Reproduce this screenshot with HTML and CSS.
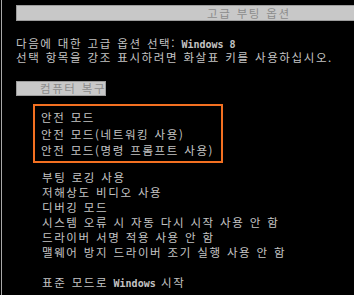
FILE: index.html
```html
<!DOCTYPE html>
<html lang="ko">
<head>
    <meta charset="UTF-8">
    <meta name="viewport" content="width=device-width, initial-scale=1.0">
    <title>고급 부팅 옵션</title>
    <link rel="stylesheet" href="styles.css">
</head>
<body>

    <div class="screen">
        <!-- 상단 제목 -->
        <div class="title-bar">고급 부팅 옵션</div>

        <div class="intro">
            <p>다음에 대한 고급 옵션 선택: <span class="latin">Windows 8</span></p>
            <p>선택 항목을 강조 표시하려면 화살표 키를 사용하십시오.</p>
        </div>

        <div class="recovery">컴퓨터 복구</div>

        <!-- 안전 모드 강조 -->
        <ul class="safe-box">
            <li>안전 모드</li>
            <li>안전 모드(네트워킹 사용)</li>
            <li>안전 모드(명령 프롬프트 사용)</li>
        </ul>

        <ul class="options">
            <li>부팅 로깅 사용</li>
            <li>저해상도 비디오 사용</li>
            <li>디버깅 모드</li>
            <li>시스템 오류 시 자동 다시 시작 사용 안 함</li>
            <li>드라이버 서명 적용 사용 안 함</li>
            <li>맬웨어 방지 드라이버 조기 실행 사용 안 함</li>
            <li class="normal">표준 모드로 <span class="latin">Windows</span> 시작</li>
        </ul>
    </div>

</body>
</html>
```

FILE: styles.css
```css
* {
    margin: 0;
    padding: 0;
    box-sizing: border-box;
}

html {
    background-color: #000;
}

body {
    margin-left: 1px;
    border-left: 1px solid #a8a8a8;
    height: 295px;
    overflow: hidden;
    background-color: #000;
    color: #c4c4c4;
    font-family: 'Noto Sans CJK KR', sans-serif;
    font-size: 11.5px;
    letter-spacing: 1.6px;
    word-spacing: 0.5px;
    white-space: nowrap;
}

.screen {
    padding: 5px 0 0 14px;
}

.latin {
    font-family: 'DejaVu Sans Mono', monospace;
    font-size: 10px;
    font-weight: bold;
    letter-spacing: 0;
    word-spacing: 0;
}

.title-bar {
    height: 16px;
    line-height: 14px;
    background-color: #c8c8c8;
    border: 1px solid #9c9c9c;
    border-right: none;
    color: #8c8c8c;
    padding-left: 190px;
}

.intro {
    margin-top: 16px;
    line-height: 12px;
}

.recovery {
    margin-top: 18px;
    width: 90px;
    height: 15px;
    line-height: 13px;
    background-color: #c8c8c8;
    border: 1px solid #9c9c9c;
    color: #8c8c8c;
    padding-left: 23px;
}

ul {
    list-style: none;
}

.safe-box {
    margin: 8px 0 0 17px;
    width: 190px;
    height: 59px;
    border: 2px solid #f37021;
    padding: 3px 0 0 6px;
    line-height: 16.5px;
}

.options {
    margin: 6.5px 0 0 26px;
    line-height: 15px;
}

.options .normal {
    margin-top: 15px;
}
```
